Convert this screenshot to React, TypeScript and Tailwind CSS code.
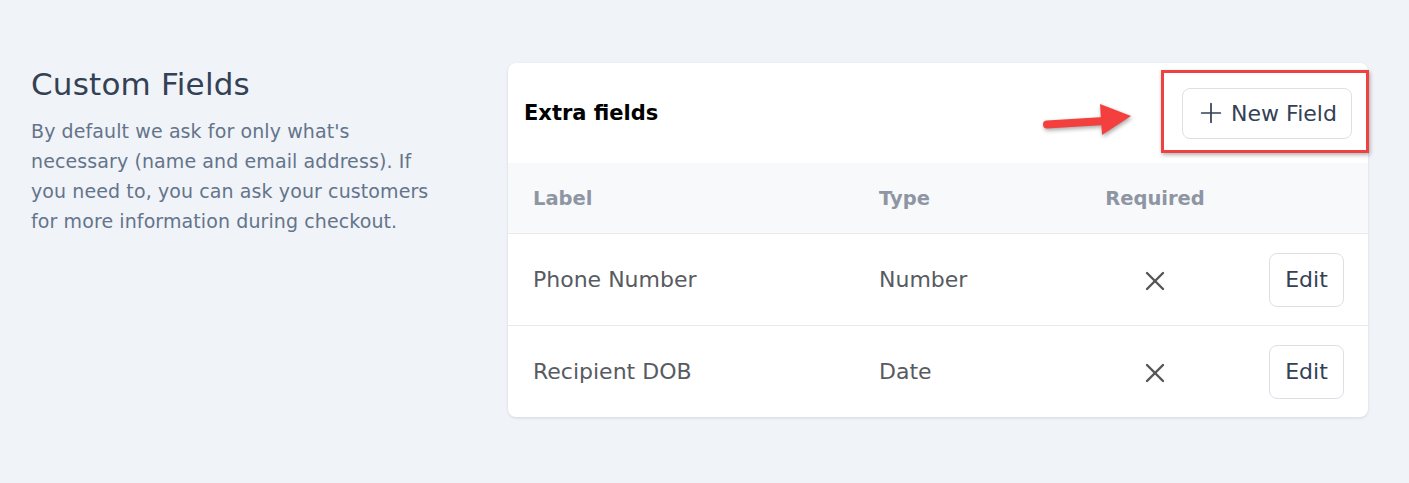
import type { FC } from "react";
import { Plus, X } from "lucide-react";

const fields = [
  { label: "Phone Number", type: "Number" },
  { label: "Recipient DOB", type: "Date" },
];

const Arrow: FC = () => (
  <svg
    width="100"
    height="44"
    viewBox="0 0 100 44"
    className="absolute left-[530px] top-[38px] drop-shadow-[1px_2px_2px_rgba(0,0,0,0.35)]"
  >
    <line x1="9" y1="23.5" x2="66" y2="20" stroke="#f43f3f" strokeWidth="8" strokeLinecap="round" />
    <polygon points="62,3 93,15 64,34" fill="#f43f3f" />
  </svg>
);

export default function App() {
  return (
    <div className="min-h-screen bg-[#f0f3f8] font-['DejaVu_Sans',sans-serif]">
      <div className="flex items-start pl-[31px] pt-[63px]">
        <div className="w-[420px] shrink-0">
          <h2 className="mt-[1px] text-[31px] leading-[40px] tracking-[0.2px] text-[#334155]">Custom Fields</h2>
          <p className="mt-[12px] w-[405px] text-[19px] leading-[30px] tracking-[0.1px] text-[#64748b]">
            By default we ask for only what's necessary (name and email address). If you need to,
            you can ask your customers for more information during checkout.
          </p>
        </div>

        <div className="relative ml-[57px] w-[860px] rounded-lg bg-white shadow-[0_1px_3px_rgba(15,23,42,0.12)]">
          <div className="flex h-[100px] items-center justify-between px-4">
            <h3 className="pt-[2px] text-[21px] font-semibold text-black">Extra fields</h3>
            <button className="flex h-[51px] w-[170px] items-center justify-center gap-[4px] rounded-lg border border-[#dcdfe5] bg-white pr-[2px] text-[22px] text-[#334155]">
              <Plus className="h-[32px] w-[32px]" strokeWidth={1.3} />
              New Field
            </button>
          </div>

          <div className="flex h-[70px] items-center bg-[#f8f9fb] pt-[2px] text-[19.5px] font-semibold text-[#8f96a3]">
            <div className="w-[371px] pl-[25px]">Label</div>
            <div className="w-[226px]">Type</div>
            <div className="w-[100px] text-center">Required</div>
          </div>

          {fields.map((f) => (
            <div
              key={f.label}
              className="flex h-[92px] items-center border-t border-[#e8eaee] text-[22px] text-[#575b61]"
            >
              <div className="w-[371px] pl-[25px]">{f.label}</div>
              <div className="w-[226px]">{f.type}</div>
              <div className="flex w-[100px] justify-center pt-[2px]">
                <X className="h-[32px] w-[32px] text-[#555]" strokeWidth={1.8} />
              </div>
              <div className="flex flex-1 justify-end pr-[24px]">
                <button className="h-[54px] w-[75px] rounded-lg border border-[#dcdfe5] bg-white text-[22px] text-[#334155]">
                  Edit
                </button>
              </div>
            </div>
          ))}

          <div className="pointer-events-none absolute left-[653px] top-[7px] h-[83px] w-[208px] border-[3px] border-[#f04141] shadow-[1px_2px_4px_rgba(0,0,0,0.3)]" />
          <Arrow />
        </div>
      </div>
    </div>
  );
}
